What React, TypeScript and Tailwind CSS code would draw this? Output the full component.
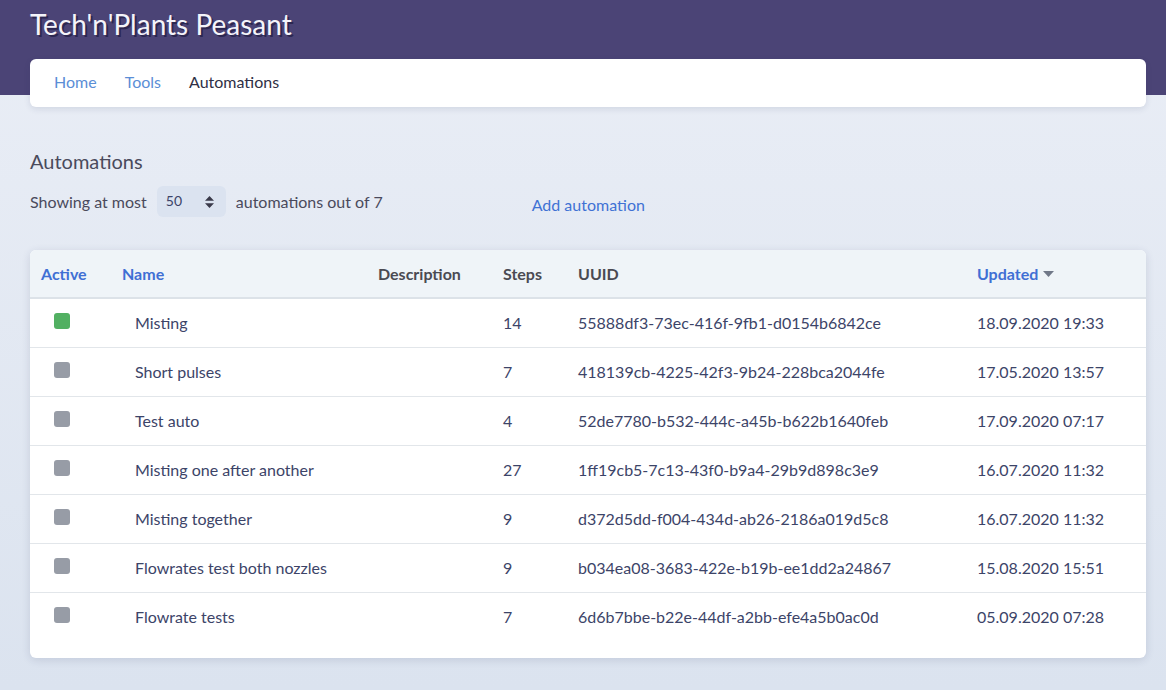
type Automation = {
    active: boolean;
    name: string;
    steps: number;
    uuid: string;
    updated: string;
};

const automations: Automation[] = [
    { active: true, name: 'Misting', steps: 14, uuid: '55888df3-73ec-416f-9fb1-d0154b6842ce', updated: '18.09.2020 19:33' },
    { active: false, name: 'Short pulses', steps: 7, uuid: '418139cb-4225-42f3-9b24-228bca2044fe', updated: '17.05.2020 13:57' },
    { active: false, name: 'Test auto', steps: 4, uuid: '52de7780-b532-444c-a45b-b622b1640feb', updated: '17.09.2020 07:17' },
    { active: false, name: 'Misting one after another', steps: 27, uuid: '1ff19cb5-7c13-43f0-b9a4-29b9d898c3e9', updated: '16.07.2020 11:32' },
    { active: false, name: 'Misting together', steps: 9, uuid: 'd372d5dd-f004-434d-ab26-2186a019d5c8', updated: '16.07.2020 11:32' },
    { active: false, name: 'Flowrates test both nozzles', steps: 9, uuid: 'b034ea08-3683-422e-b19b-ee1dd2a24867', updated: '15.08.2020 15:51' },
    { active: false, name: 'Flowrate tests', steps: 7, uuid: '6d6b7bbe-b22e-44df-a2bb-efe4a5b0ac0d', updated: '05.09.2020 07:28' },
];

function App() {
    return (
        <div className="min-h-screen bg-gradient-to-b from-[#eaeef6] to-[#dbe3ef] text-[#3c4468]" style={{ fontFamily: 'Lato, "Open Sans", sans-serif' }}>
            {/* Header */}
            <div className="bg-[#4b4476] h-[95px] pl-[30px] pt-[6px]">
                <h1 className="text-[28px] leading-[36px] text-[#f4f4fa] [text-shadow:2px_2px_0_#2c2750]">Tech'n'Plants Peasant</h1>
            </div>

            <div className="pl-[30px] pr-[20px]">
                {/* Nav */}
                <nav className="-mt-[36px] h-[48px] bg-white rounded-[6px] shadow-[0_2px_6px_rgba(40,50,90,0.12)] flex items-center gap-[28px] px-[24px] pb-[2px] text-[16px]">
                    <a className="text-[#5b8ed6]">Home</a>
                    <a className="text-[#5b8ed6]">Tools</a>
                    <a className="text-[#2f2f45]">Automations</a>
                </nav>

                {/* Title + controls */}
                <h2 className="mt-[40px] text-[20px] leading-[28px] text-[#4a4a5c]">Automations</h2>
                <div className="mt-[11px] flex items-center text-[16px] text-[#4a4a5c]">
                    <span>Showing at most</span>
                    <div className="ml-[10px] w-[69px] h-[31px] rounded-[6px] bg-[#dbe3f0] flex items-center justify-between pl-[9px] pr-[12px] text-[14px] text-[#3c4468]">
                        <span className="-mt-[2px]">50</span>
                        <svg width="9" height="12" viewBox="0 0 9 12">
                            <path d="M4.5 0L9 4.8H0z M0 7.2h9L4.5 12z" fill="#3a3a4a" />
                        </svg>
                    </div>
                    <span className="ml-[10px]">automations out of 7</span>
                    <a className="ml-[149px] mt-[6px] text-[#3f72d4]">Add automation</a>
                </div>

                {/* Table */}
                <div className="mt-[33px] bg-white rounded-[6px] shadow-[0_2px_8px_rgba(40,50,90,0.14)] overflow-hidden pb-[17px]">
                    <table className="w-full table-fixed border-collapse text-[16px]">
                        <colgroup>
                            <col className="w-[81px]" />
                            <col className="w-[256px]" />
                            <col className="w-[125px]" />
                            <col className="w-[75px]" />
                            <col className="w-[399px]" />
                            <col />
                        </colgroup>
                        <thead>
                            <tr className="bg-[#eff4f8] h-[48px] border-b-2 border-[#dce2e8] text-left">
                                <th className="pl-[11px] font-bold text-[#3f6fd4]">Active</th>
                                <th className="pl-[11px] font-bold text-[#3f6fd4]">Name</th>
                                <th className="pl-[11px] font-bold text-[#4a4a52]">Description</th>
                                <th className="pl-[11px] font-bold text-[#4a4a52]">Steps</th>
                                <th className="pl-[11px] font-bold text-[#4a4a52]">UUID</th>
                                <th className="pl-[11px] font-bold text-[#3f6fd4]">
                                    <span className="inline-flex items-center gap-[5px]">
                                        Updated
                                        <svg width="11" height="6" viewBox="0 0 11 6"><path d="M0 0h11L5.5 6z" fill="#707888" /></svg>
                                    </span>
                                </th>
                            </tr>
                        </thead>
                        <tbody>
                            {automations.map((a, i) => (
                                <tr key={a.uuid} className={i < automations.length - 1 ? 'h-[49px] border-b border-[#e2e6ea]' : 'h-[49px]'}>
                                    <td className="pl-[24px] align-top pt-[14px]">
                                        <div className={a.active ? 'w-[16px] h-[16px] rounded-[3px] bg-[#52b062]' : 'w-[16px] h-[16px] rounded-[3px] bg-[#979ca6]'} />
                                    </td>
                                    <td className="pl-[24px]">{a.name}</td>
                                    <td className="pl-[11px]"></td>
                                    <td className="pl-[11px]">{a.steps}</td>
                                    <td className="pl-[11px]">{a.uuid}</td>
                                    <td className="pl-[11px]">{a.updated}</td>
                                </tr>
                            ))}
                        </tbody>
                    </table>
                </div>
            </div>
        </div>
    );
}

export default App;
